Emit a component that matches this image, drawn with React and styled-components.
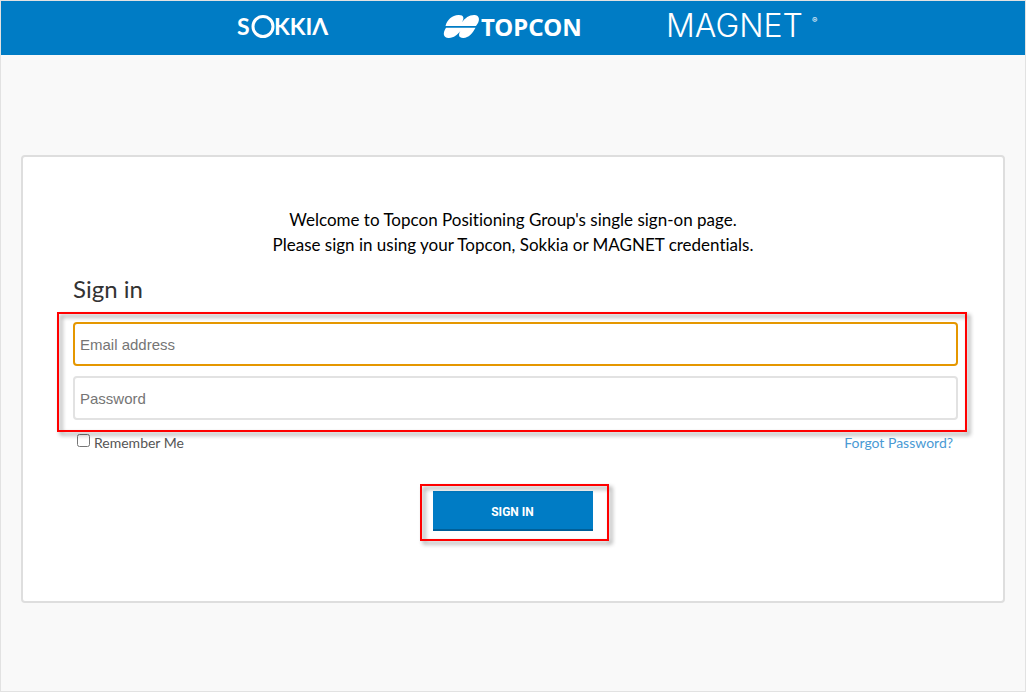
import React from "react";
import styled, { createGlobalStyle } from "styled-components";

const GlobalStyle = createGlobalStyle`
  *, *::before, *::after { box-sizing: border-box; }
  body {
    margin: 0;
    background: #f9f9f9;
    color: #000;
    font-family: Lato, "Liberation Sans", sans-serif;
    font-variant-ligatures: none;
  }
`;

const Page = styled.div`
  min-height: 100vh;
  border: 1px solid #e2e2e2;
  background: #f9f9f9;
`;

const Header = styled.header`
  display: grid;
  grid-template-columns: repeat(3, 230px);
  justify-content: center;
  align-items: center;
  height: 54px;
  background: #007cc5;
  color: #fff;
`;

const Logo = styled.svg`
  display: block;
  justify-self: center;
  overflow: visible;
  fill: #fff;
`;

const SokkiaText = styled.text`
  font: 700 23px Lato, sans-serif;
`;

const TopconText = styled.text`
  font: 700 24px "Noto Sans", sans-serif;
`;

const MagnetText = styled.text`
  font: 300 32px Inter, sans-serif;
`;

const RegisteredText = styled.text`
  font: 400 8px Inter, sans-serif;
`;

const Main = styled.main`
  padding: 100px 20px 88px;
`;

const Card = styled.form`
  padding: 50px 45px 70px 50px;
  border: 2px solid #dedede;
  border-radius: 4px;
  background: #fff;
`;

const Intro = styled.p`
  margin: 0 5px 0 0;
  text-align: center;
  font-size: 17px;
  line-height: 25px;
`;

const Title = styled.h1`
  margin: 15px 0 16px;
  font-size: 24px;
  font-weight: 400;
  line-height: 34px;
  color: #333;
`;

const Fields = styled.div`
  position: relative;
  display: grid;
  gap: 10px;
`;

const Field = styled.input`
  width: 100%;
  height: 44px;
  padding: 0 5px;
  border: 2px solid #e2e2e2;
  border-radius: 4px;
  outline: none;
  background: #fff;
  font: 15px "Liberation Sans", Arial, sans-serif;
  color: #333;

  &::placeholder { color: #757575; opacity: 1; }
  &:focus { border-color: #e59700; }
`;

const Highlight = styled.span`
  position: absolute;
  inset: ${(p) => p.$inset};
  border: 2px solid #f00;
  filter: drop-shadow(3px 3px 2px rgba(0, 0, 0, 0.45));
  pointer-events: none;
`;

const Options = styled.div`
  display: flex;
  justify-content: space-between;
  align-items: center;
  padding: 12px 5px 0 4px;
  font-size: 14px;
  line-height: 22px;
`;

const Remember = styled.label`
  display: flex;
  align-items: center;
  gap: 4px;
  color: #555;
`;

const Checkbox = styled.input`
  width: 13px;
  height: 13px;
  margin: 0 0 5px;
`;

const Forgot = styled.a`
  color: #4a9ad4;
  text-decoration: none;
`;

const Actions = styled.div`
  position: relative;
  width: 160px;
  margin: 37px auto 0;
  left: -3px;
`;

const Submit = styled.button`
  display: block;
  width: 100%;
  height: 40px;
  padding: 3px 0 0;
  border: 0;
  border-bottom: 2px solid #005f99;
  background: #007cc5;
  color: #fff;
  font: 700 12px Roboto, sans-serif;
`;

function SokkiaLogo() {
  return (
    <Logo width="92" height="24" role="img" aria-label="SOKKIA">
      <SokkiaText x="0" y="19">S</SokkiaText>
      <circle cx="26" cy="10.5" r="10" fill="none" stroke="#fff" strokeWidth="3" />
      <SokkiaText x="37" y="19">KKIΛ</SokkiaText>
    </Logo>
  );
}

function TopconLogo() {
  return (
    <Logo width="138" height="24" role="img" aria-label="TOPCON">
      <path d="M1.500 10C3 4 8-.7 14.500-1C20-1.200 20.500 2.500 18 6.200C21 2 25-.8 30-1C36-1.200 36.500 5 32 10Z" />
      <path d="M2 11.800H31.500C28.500 17.500 24.500 21.800 19.500 22C14.500 22.200 14 18.500 16.500 14.800C13.500 19 10 21.800 5 22C-1 22.200-1.500 17 2 11.800Z" />
      <TopconText x="37" y="20">TOPCON</TopconText>
    </Logo>
  );
}

function MagnetLogo() {
  return (
    <Logo width="151" height="24" role="img" aria-label="MAGNET®">
      <MagnetText x="-2" y="21">MAGNET</MagnetText>
      <RegisteredText x="144" y="7">®</RegisteredText>
    </Logo>
  );
}

export default function App() {
  return (
    <>
      <GlobalStyle />
      <Page>
        <Header>
          <SokkiaLogo />
          <TopconLogo />
          <MagnetLogo />
        </Header>
        <Main>
          <Card onSubmit={(e) => e.preventDefault()}>
            <Intro>
              Welcome to Topcon Positioning Group's single sign-on page.
              <br />
              Please sign in using your Topcon, Sokkia or MAGNET credentials.
            </Intro>
            <Title>Sign in</Title>
            <Fields>
              <Field type="email" placeholder="Email address" aria-label="Email address" autoFocus />
              <Field type="password" placeholder="Password" aria-label="Password" />
              <Highlight $inset="-10px -9px -12px -16px" />
            </Fields>
            <Options>
              <Remember>
                <Checkbox type="checkbox" />
                Remember Me
              </Remember>
              <Forgot href="#forgot">Forgot Password?</Forgot>
            </Options>
            <Actions>
              <Submit type="submit">SIGN IN</Submit>
              <Highlight $inset="-7px -16px -10px -13px" />
            </Actions>
          </Card>
        </Main>
      </Page>
    </>
  );
}
